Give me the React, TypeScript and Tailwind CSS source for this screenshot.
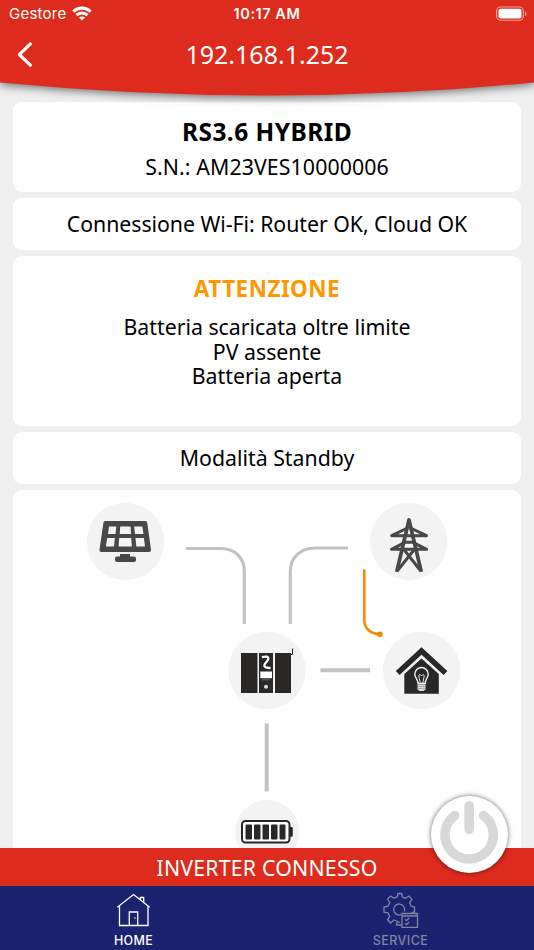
import type { ReactNode } from "react";

function Card({ className, children }: { className: string; children: ReactNode }) {
  return <section className={`rounded-[9px] bg-white text-center ${className}`}>{children}</section>;
}

function WifiIcon() {
  return (
    <svg className="ml-[5px] h-[15px] w-[20px] -translate-y-px" viewBox="0 0 20 15" fill="none" stroke="white" strokeWidth="3.1">
      <path d="M1.300 5.6C6.2.9 13.8.9 18.700 5.6" />
      <path d="M4.5 9.200C7.6 6.200 12.4 6.200 15.5 9.200" />
      <path d="M7 11.6c1.8-1.6 4.2-1.6 6 0l-3 3z" fill="white" stroke="none" />
    </svg>
  );
}

function Header() {
  return (
    <header className="relative z-10 h-[82px] text-white">
      <svg className="absolute left-0 top-0 h-[110px] w-[534px] drop-shadow-[0_2px_5px_rgba(0,0,0,0.55)]" viewBox="0 0 534 110">
        <path d="M-12 -12H546V82L534 82.5Q400 95.5 267 95.5T0 82.5L-12 82Z" fill="#dd2b1d" />
      </svg>
      <div className="relative grid h-[28px] grid-cols-3 items-center font-['Inter','Liberation_Sans',sans-serif] text-[15px]">
        <div className="flex items-center pl-[9px] tracking-[0.25px]">
          <span>Gestore</span>
          <WifiIcon />
        </div>
        <time className="text-center text-[14.5px] font-semibold tracking-[0.55px]">10:17 AM</time>
        <svg className="mr-[6px] h-[16px] w-[34px] justify-self-end" viewBox="0 0 34 16">
          <rect x="2.6" y="1" width="26.8" height="13.2" rx="4" fill="none" stroke="#f0a198" strokeWidth="1.1" />
          <rect x="4.5" y="2.8" width="23" height="9.6" rx="2" fill="white" />
          <path d="M31 5.2c2 .8 2 4 0 4.8z" fill="#f0a198" />
        </svg>
      </div>
      <div className="relative flex h-[54px] items-center justify-center">
        <svg className="absolute left-[16px] top-[13px] h-[27px] w-[17px]" viewBox="0 0 17 27" fill="none" stroke="white" strokeWidth="3.200" strokeLinecap="round" strokeLinejoin="round">
          <path d="M14.400 2.900 3.300 13.6 14.400 24.200" />
        </svg>
        <h1 className="text-[25px]">192.168.1.252</h1>
      </div>
    </header>
  );
}

function SolarPanel() {
  return (
    <g fill="#484848">
      <path fillRule="evenodd" d="M105.500 521H145.500Q147 521 147.200 522.500L151 549.500Q151.200 552 149 552H101.500Q99.200 552 99.500 549.500L103.500 522.500Q103.800 521 105.500 521ZM109 526.500 108 534H115.500L116.300 526.500ZM120.200 526.500 119.700 534H131L130.600 526.500ZM134.200 526.500 135 534H143.500L142.300 526.500ZM107.200 538 105.900 546.500H114L114.800 538ZM119.200 538 118.500 546.500H131.900L131.200 538ZM135.500 538 136.300 546.500H145L143.900 538Z" />
      <path d="M120 554h10v2.500h4q2 0 2 2v1.500q0 2-2 2h-17q-2 0-2-2v-1.500q0-2 2-2h3z" />
    </g>
  );
}

function Pylon() {
  return (
    <g fill="none" stroke="#484848" strokeWidth="3" strokeLinejoin="round">
      <path d="M396.700 571.900 409 520 421.300 571.900" strokeWidth="3.700" />
      <path d="M406.500 528.500 391.700 535.700H426.500L411.500 528.500" />
      <path d="M405 542.300 391.500 549.300H426.700L413 542.300Z" />
      <path d="M403.500 549 420 570M414.700 549 398 570" />
    </g>
  );
}

function Inverter() {
  return (
    <g fill="#292827">
      <path d="M241 653h16.500v40H241zM259 653h14v40H259zM275 653h16v40H275z" />
      <path d="M292.500 648.500v6h-3" fill="none" stroke="#292827" strokeWidth="1" />
      <path d="M262 657.200C265.500 656 269 656.400 268.300 659 267.500 662 263.500 663.500 264.500 666.200 265.300 668 267.500 668 270.500 668" fill="none" stroke="white" strokeWidth="2.300" />
      <path d="M260.300 671.500h11.700v6.700h-11.700z" fill="white" />
      <path d="M262 679.800h8" stroke="#777" strokeWidth=".8" />
      <circle cx="266" cy="686.800" r="2" fill="#ddd" />
    </g>
  );
}

function LitHouse() {
  return (
    <g>
      <path d="M404.300 674 421.500 658.500 438.800 674V693.800H404.300Z" fill="#292827" />
      <path d="M397.700 673 421.500 651 445.500 673" fill="none" stroke="#292827" strokeWidth="5.500" />
      <g fill="none" stroke="#f3f3f3" strokeWidth="1.400">
        <path d="M418 683.500C418 679 414.800 678 414.800 674.200a6.700 6.700 0 0 1 13.400 0C428.200 678 425.200 679 425.200 683.500Z" />
        <path d="M420.300 683 418.700 675.500 420.200 674.500 421.500 676 422.800 674.500 424.300 675.500 422.800 683" strokeWidth=".9" />
      </g>
      <path d="M417.500 684.500h8v5l-2 1.500h-4l-2-1.500z" fill="#ddd" />
      <path d="M417.500 686.500h8M417.500 688.500h8" stroke="#888" strokeWidth=".6" />
    </g>
  );
}

function Battery() {
  return (
    <g fill="#292827">
      <rect x="242" y="821" width="47.500" height="21.500" rx="3.500" fill="#fff" stroke="#292827" strokeWidth="2" />
      <path d="M290 827h1.500q1.300 0 1.300 1.300v7.200q0 1.300-1.300 1.300H290z" />
      <rect x="245.500" y="824.500" width="6.500" height="15" rx="1" />
      <rect x="254" y="824.500" width="6.500" height="15" rx="1" />
      <rect x="262.500" y="824.500" width="6.500" height="15" rx="1" />
      <rect x="271" y="824.500" width="6.500" height="15" rx="1" />
      <rect x="279.500" y="824.500" width="6" height="15" rx="1" />
    </g>
  );
}

function EnergyDiagram() {
  return (
    <svg className="h-[358px] w-[508px]" viewBox="13 490 508 358">
      <g fill="#f3f3f3">
        <circle cx="125.500" cy="541.500" r="38.700" />
        <circle cx="408.700" cy="541.500" r="38.700" />
        <circle cx="267" cy="670.500" r="38.700" />
        <circle cx="421.700" cy="670.500" r="38.700" />
        <circle cx="267" cy="832" r="32" />
      </g>
      <g fill="none" stroke="#c2c2c2" strokeWidth="3.200">
        <path d="M186 548.500H221C235 548.500 244.300 558 244.300 571V624" />
        <path d="M348 548H315C300 548 290.300 558 290.300 571V624" />
        <path d="M320.500 670.300H370" strokeWidth="4" />
        <path d="M266.700 723.500V791.500" strokeWidth="4" />
      </g>
      <path d="M364.300 569.500V620C364.300 628 370 634 380 634.200" fill="none" stroke="#f78a00" strokeWidth="2.600" />
      <circle cx="380" cy="634.300" r="2.800" fill="#f78a00" />
      <SolarPanel />
      <Pylon />
      <Inverter />
      <LitHouse />
      <Battery />
    </svg>
  );
}

function PowerButton() {
  return (
    <button aria-label="Power" className="absolute left-[431px] top-[796px] z-20 h-[77px] w-[77px] rounded-full bg-white shadow-[0_0_5px_rgba(0,0,0,0.6)]">
      <svg className="h-[77px] w-[77px]" viewBox="431 796 77 77" fill="none" stroke="#d8d8d8" strokeWidth="9.500" strokeLinecap="round">
        <path d="M454.700 815.500A24.200 24.200 0 1 0 483.600 815.500" />
        <path d="M469.200 806V829.500" />
      </svg>
    </button>
  );
}

function HomeIcon() {
  return (
    <svg className="h-[34px] w-[34px]" viewBox="117 893 34 34" fill="none" stroke="white" strokeWidth="1.300">
      <path d="M119.500 905.500V925.500H148V905.500M117.300 907.300 133.500 894.500 149.700 907.300M140.300 899.500V897.500H143.700V903M129.300 925.500V912H137.700V925.500" />
      <path d="M134.500 918h1" />
    </svg>
  );
}

function ServiceIcon() {
  return (
    <svg className="h-[36px] w-[36px]" viewBox="382.500 892 36 36" fill="none" stroke="#8184a3" strokeWidth="1.300">
      <path d="M399.500 922.500 397 921.500 396 925H401.500M396.800 921.500 393.500 920 390 923 387 919.800 389.200 916.500 387.800 913 383.500 912.200V907L387.500 906.200 389.300 902.500 387 899 390.200 896 393.500 898.200 396.700 896.800 397.500 893.500H401L402 897 405 898.200 408.500 896 411.500 899.200 409.200 902.500 410.500 906 414 907V912L411 912.600" />
      <path d="M400.500 914.700A5.500 5.500 0 1 1 403.800 911.500" />
      <path d="M401.500 913.500H417V927.300H401.500ZM401.500 916H417" />
      <path d="M404.500 919.300 406 920.700 408.700 918M404.500 923.300 406 924.700 408.700 922" />
    </svg>
  );
}

export default function App() {
  return (
    <div className="relative flex h-[950px] w-[534px] flex-col overflow-hidden bg-[#efefef] font-['Noto_Sans','Open_Sans',sans-serif] text-black">
      <Header />
      <main className="flex flex-1 flex-col gap-[6px] px-[13px] pt-[20px]">
        <Card className="h-[90px] pt-[14px]">
          <h2 className="text-[24.5px] font-bold leading-[32px] tracking-[0.45px]">RS3.6 HYBRID</h2>
          <p className="mt-[3px] text-[21.3px] leading-[32px] tracking-[0.1px]">S.N.: AM23VES10000006</p>
        </Card>
        <Card className="flex h-[52px] items-center justify-center">
          <p className="whitespace-nowrap text-[21.3px] tracking-[-0.04px]">Connessione Wi-Fi: Router OK, Cloud OK</p>
        </Card>
        <Card className="h-[170px] pt-[17px]">
          <h2 className="text-[22.5px] font-bold leading-[32px] tracking-[0.45px] text-[#ff9800]">ATTENZIONE</h2>
          <p className="mt-[10px] whitespace-pre-line text-[21.3px] leading-[24.5px]">
            {"Batteria scaricata oltre limite\nPV assente\nBatteria aperta"}
          </p>
        </Card>
        <Card className="flex h-[52px] items-center justify-center">
          <p className="text-[21.3px]">Modalità Standby</p>
        </Card>
        <Card className="h-[358px] rounded-b-none">
          <EnergyDiagram />
        </Card>
      </main>
      <PowerButton />
      <div className="flex h-[38px] shrink-0 items-center justify-center bg-[#dd2b1d] pt-px text-[21.3px] tracking-[0.2px] text-white">
        <span>INVERTER CONNESSO</span>
      </div>
      <nav className="grid h-[64px] shrink-0 grid-cols-2 bg-[#1b226f] font-['Inter','Liberation_Sans',sans-serif] text-[12.5px] font-medium leading-[16px] text-white">
        <a className="flex flex-col items-center justify-between pb-px pt-[7px]">
          <HomeIcon />
          <span className="tracking-[0.3px]">HOME</span>
        </a>
        <a className="flex flex-col items-center justify-between pb-px pt-[6px] text-[#8184a3]">
          <ServiceIcon />
          <span className="tracking-[0.45px]">SERVICE</span>
        </a>
      </nav>
    </div>
  );
}
